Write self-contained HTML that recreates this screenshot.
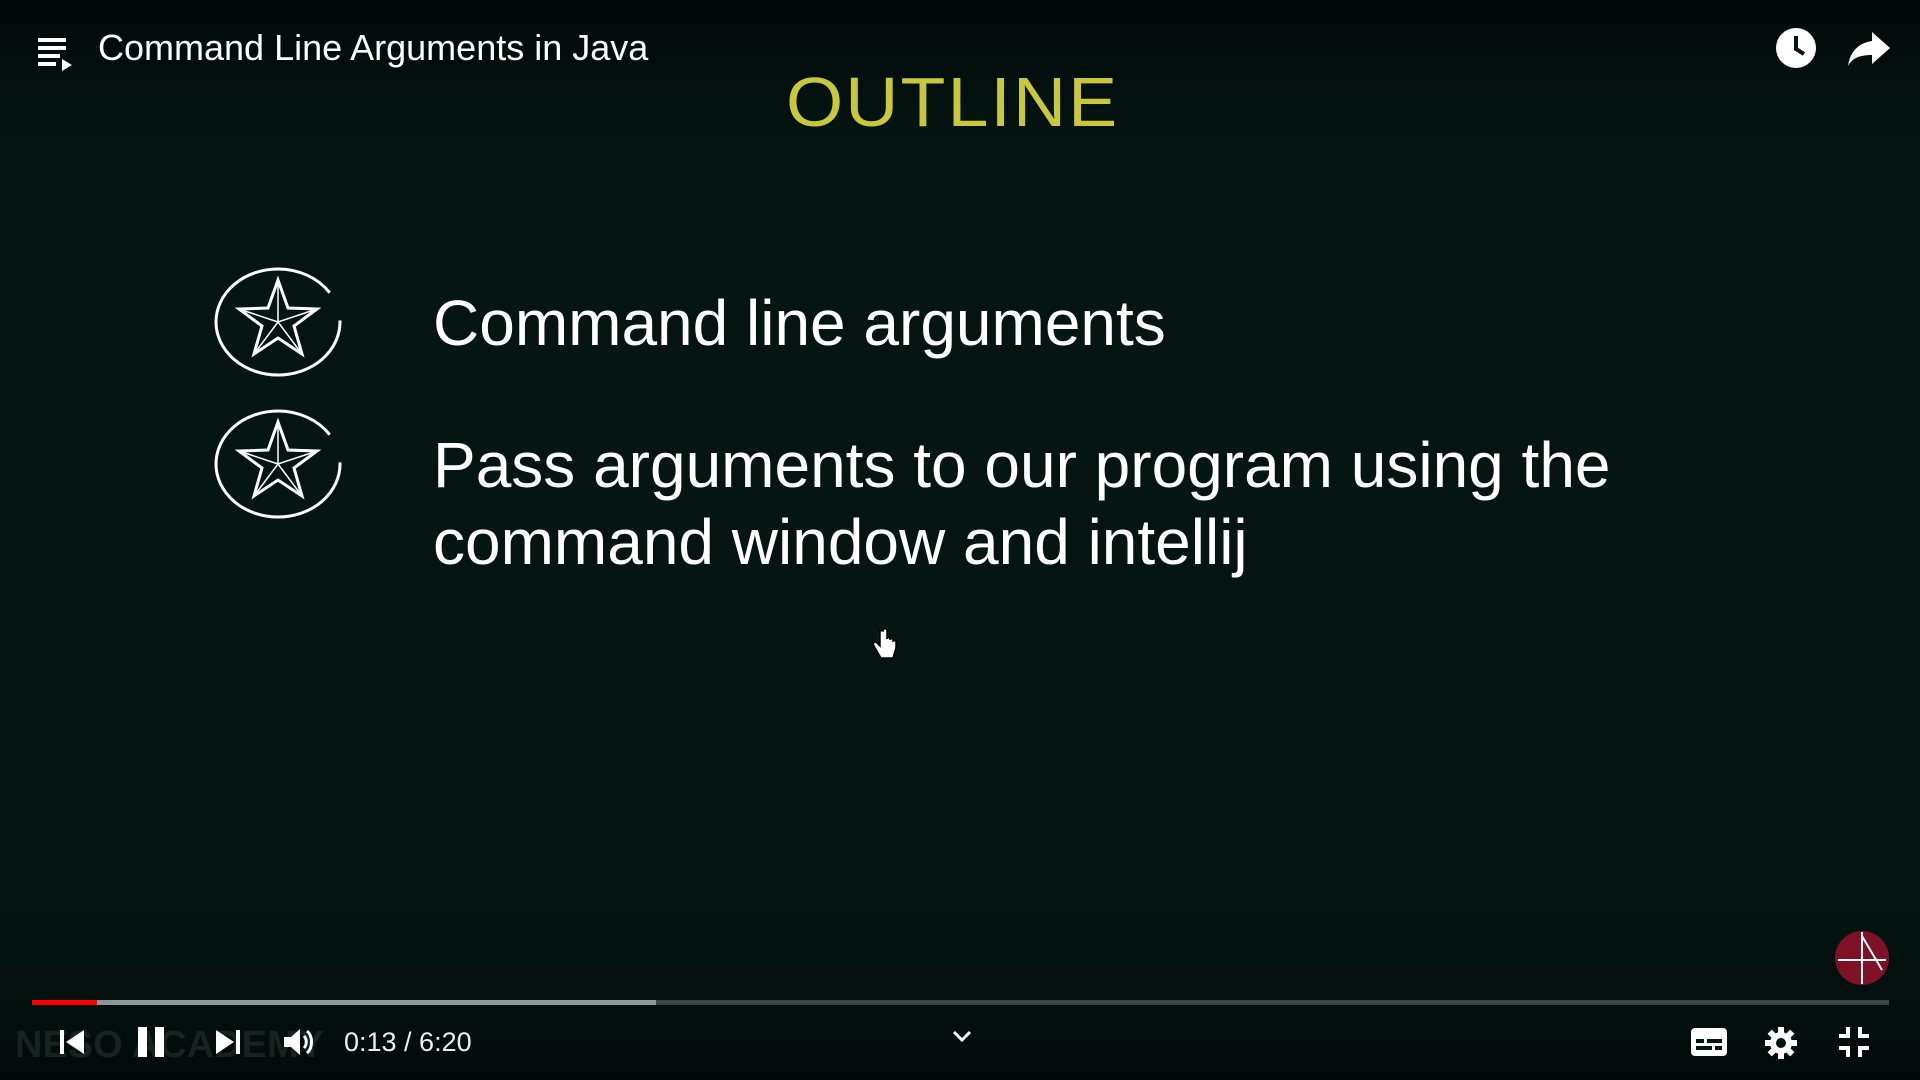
<!DOCTYPE html>
<html><head><style>
html,body{margin:0;padding:0;width:1920px;height:1080px;overflow:hidden;background:#051512;font-family:"Liberation Sans",sans-serif;}
.bg{position:absolute;left:0;top:0;width:1920px;height:1080px;background:linear-gradient(#020908 0px,#051512 140px,#051512 900px,#030b0a 1080px);}
.t{position:absolute;white-space:nowrap;color:#fff;}
svg{position:absolute;}
</style></head><body>
<div class="bg"></div>
<svg style="left:36px;top:36px" width="40" height="36" viewBox="0 0 40 36"><rect x="2" y="2" width="28" height="4" fill="#fff"/><rect x="2" y="10" width="28" height="4" fill="#fff"/><rect x="2" y="18" width="22" height="4" fill="#fff"/><rect x="2" y="26" width="18" height="4" fill="#fff"/><path d="M26 23 L36 29 L26 35Z" fill="#fff"/></svg>
<div class="t" style="left:98px;top:27px;font-size:36px;">Command Line Arguments in Java</div>
<div class="t" style="left:786px;top:62px;font-size:70px;color:#c9c83a;letter-spacing:2px;transform:scaleX(1.05);transform-origin:left;">OUTLINE</div>
<svg style="left:1774px;top:26px" width="44" height="44" viewBox="0 0 44 44"><circle cx="22" cy="22" r="20" fill="#fff"/><path d="M22 10 V23 L30 28" stroke="#051512" stroke-width="4" fill="none"/></svg>
<svg style="left:1846px;top:28px" width="46" height="40" viewBox="0 0 46 40"><path d="M26 4 L44 20 L26 36 V27 C14 27 6 30 2 38 C4 24 12 15 26 13Z" fill="#fff"/></svg>

<svg style="left:210px;top:260px" width="140" height="130" viewBox="0 0 140 130"><ellipse cx="68" cy="62" rx="62" ry="53" stroke="#fff" stroke-width="3" fill="none" stroke-dasharray="330 30"/><path d="M68 20 L78 48 L107 49 L84 66 L92 94 L68 78 L44 94 L52 66 L29 49 L58 48Z" stroke="#fff" stroke-width="3" fill="none"/><path d="M68 20 L68 62 L107 49 M68 62 L92 94 M68 62 L44 94 M68 62 L29 49" stroke="#fff" stroke-width="1.5" fill="none"/></svg>
<svg style="left:210px;top:402px" width="140" height="130" viewBox="0 0 140 130"><ellipse cx="68" cy="62" rx="62" ry="53" stroke="#fff" stroke-width="3" fill="none" stroke-dasharray="330 30"/><path d="M68 20 L78 48 L107 49 L84 66 L92 94 L68 78 L44 94 L52 66 L29 49 L58 48Z" stroke="#fff" stroke-width="3" fill="none"/><path d="M68 20 L68 62 L107 49 M68 62 L92 94 M68 62 L44 94 M68 62 L29 49" stroke="#fff" stroke-width="1.5" fill="none"/></svg>

<div class="t" style="left:433px;top:286px;font-size:64px;">Command line arguments</div>
<div class="t" style="left:433px;top:427px;font-size:64px;line-height:77px;">Pass arguments to our program using the<br>command window and intellij</div>

<svg style="left:872px;top:628px" width="26" height="34" viewBox="0 0 26 34"><path d="M8 2 V18 L5 15 C3 13 0 15 2 18 L9 30 H21 L24 20 V14 C24 12 21 12 21 14 V12 C21 10 18 10 18 12 V11 C18 9 15 9 15 11 V3 C15 0 11 0 11 3Z" fill="#fff" stroke="#000" stroke-width="1.5"/></svg>

<svg style="left:1834px;top:930px" width="56" height="56" viewBox="0 0 56 56"><circle cx="28" cy="28" r="27" fill="#7e1126"/><path d="M28 2 V54 M4 30 H52 M28 6 L48 40" stroke="#fff" stroke-width="2" fill="none"/></svg>

<div style="position:absolute;left:32px;top:1000px;width:1857px;height:5px;background:#3a4644;"></div>
<div style="position:absolute;left:32px;top:1000px;width:624px;height:5px;background:#8e9593;"></div>
<div style="position:absolute;left:32px;top:1000px;width:65px;height:5px;background:#f00;"></div>

<div class="t" style="left:15px;top:1024px;font-size:38px;color:#18221f;font-weight:bold;">NESO ACADEMY</div>
<svg style="left:58px;top:1028px" width="28" height="28" viewBox="0 0 28 28"><rect x="2" y="2" width="4" height="24" fill="#fff"/><path d="M26 2 V26 L8 14Z" fill="#fff"/></svg>
<svg style="left:136px;top:1026px" width="32" height="32" viewBox="0 0 32 32"><rect x="2" y="1" width="9" height="30" fill="#fff"/><rect x="19" y="1" width="9" height="30" fill="#fff"/></svg>
<svg style="left:214px;top:1028px" width="28" height="28" viewBox="0 0 28 28"><path d="M2 2 V26 L20 14Z" fill="#fff"/><rect x="22" y="2" width="4" height="24" fill="#fff"/></svg>
<svg style="left:282px;top:1026px" width="34" height="32" viewBox="0 0 34 32"><path d="M2 11 H9 L18 3 V29 L9 21 H2Z" fill="#fff"/><path d="M22 10 C25 13 25 19 22 22 M25 5 C31 10 31 22 25 27" stroke="#fff" stroke-width="3" fill="none"/></svg>
<div class="t" style="left:344px;top:1027px;font-size:27px;color:#eee;">0:13 / 6:20</div>
<svg style="left:952px;top:1030px" width="20" height="14" viewBox="0 0 20 14"><path d="M2 2 L10 10 L18 2" stroke="#fff" stroke-width="3" fill="none"/></svg>
<svg style="left:1690px;top:1026px" width="38" height="32" viewBox="0 0 38 32"><rect x="1" y="2" width="36" height="28" rx="4" fill="#fff"/><rect x="6" y="13" width="8" height="4" fill="#051512"/><rect x="17" y="13" width="15" height="4" fill="#051512"/><rect x="6" y="20" width="16" height="4" fill="#051512"/><rect x="25" y="20" width="7" height="4" fill="#051512"/></svg>
<svg style="left:1764px;top:1026px" width="34" height="34" viewBox="0 0 34 34"><g fill="#fff"><circle cx="17" cy="17" r="11"/><rect x="14" y="1" width="6" height="32"/><rect x="1" y="14" width="32" height="6"/><rect x="14" y="1" width="6" height="32" transform="rotate(45 17 17)"/><rect x="14" y="1" width="6" height="32" transform="rotate(-45 17 17)"/></g><circle cx="17" cy="17" r="5" fill="#051512"/></svg>
<svg style="left:1838px;top:1026px" width="32" height="32" viewBox="0 0 32 32"><path d="M10 1 V10 H1 M22 1 V10 H31 M1 22 H10 V31 M31 22 H22 V31" stroke="#fff" stroke-width="4" fill="none"/></svg>
</body></html>
